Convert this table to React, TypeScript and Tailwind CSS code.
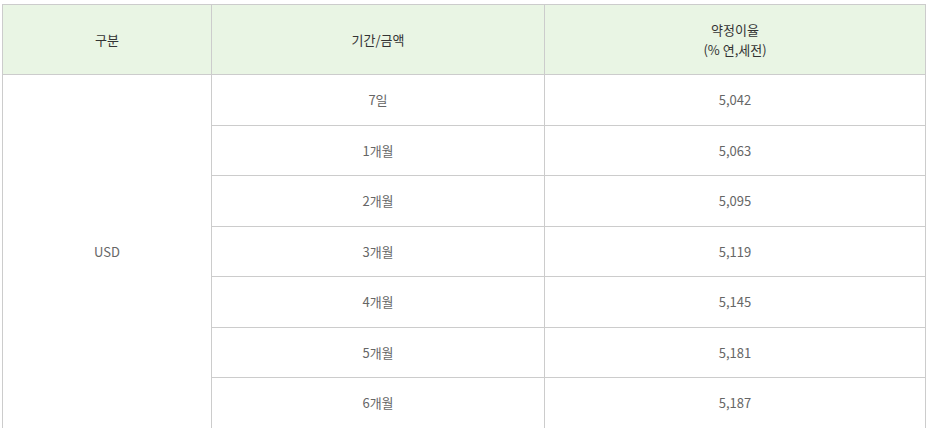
import React from 'react';

const rows = [
  { period: '7일', rate: '5,042' },
  { period: '1개월', rate: '5,063' },
  { period: '2개월', rate: '5,095' },
  { period: '3개월', rate: '5,119' },
  { period: '4개월', rate: '5,145' },
  { period: '5개월', rate: '5,181' },
  { period: '6개월', rate: '5,187' },
];

export default function App() {
  return (
    <div className="min-h-screen bg-white pt-[4px] pl-[2px]" style={{ fontFamily: '"Noto Sans CJK KR", "Noto Sans", sans-serif' }}>
      <table className="w-[924px] border-collapse text-[13px] table-fixed">
        <colgroup>
          <col className="w-[209px]" />
          <col className="w-[333px]" />
          <col />
        </colgroup>
        <thead>
          <tr className="h-[70px] bg-[#e9f5e4] text-[#333]">
            <th className="border border-[#cccccc] font-normal">구분</th>
            <th className="border border-[#cccccc] font-normal">기간/금액</th>
            <th className="border border-[#cccccc] font-normal leading-[20px]">
              약정이율
              <br />
              (% 연,세전)
            </th>
          </tr>
        </thead>
        <tbody className="text-[#666]">
          {rows.map((r, i) => (
            <tr key={r.period} className="h-[50.5px]">
              {i === 0 && (
                <td rowSpan={rows.length} className="border border-[#cccccc] text-center">
                  USD
                </td>
              )}
              <td className="border border-[#cccccc] text-center">{r.period}</td>
              <td className="border border-[#cccccc] text-center">{r.rate}</td>
            </tr>
          ))}
        </tbody>
      </table>
    </div>
  );
}
